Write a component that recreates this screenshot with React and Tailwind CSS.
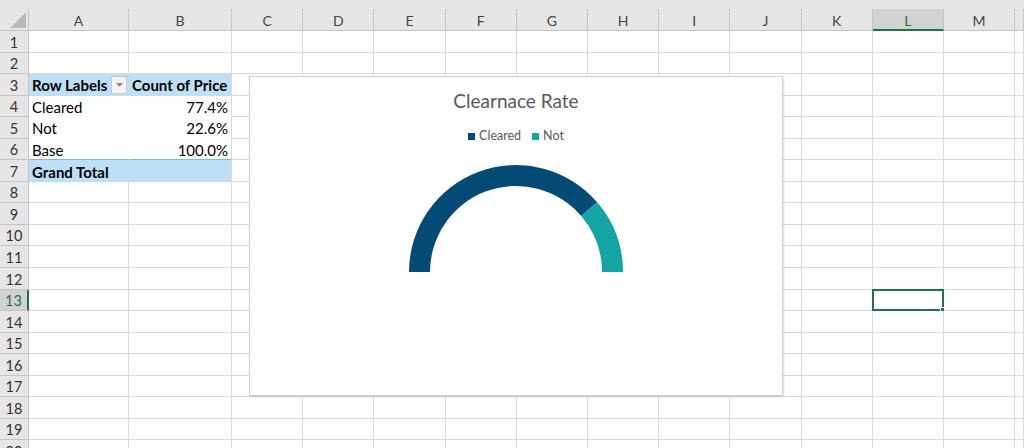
import React from 'react';

const COLS = ['A', 'B', 'C', 'D', 'E', 'F', 'G', 'H', 'I', 'J', 'K', 'L', 'M', ''];
const ROWS = Array.from({ length: 20 }, (_, i) => i + 1);

const DATA = {
  '3-0': { text: 'Row Labels', bold: true, filter: true },
  '3-1': { text: 'Count of Price', bold: true },
  '4-0': { text: 'Cleared' },
  '4-1': { text: '77.4%', right: true },
  '5-0': { text: 'Not' },
  '5-1': { text: '22.6%', right: true },
  '6-0': { text: 'Base' },
  '6-1': { text: '100.0%', right: true },
  '7-0': { text: 'Grand Total', bold: true },
};

function cellClass(r, c) {
  const pivot = r >= 3 && r <= 7 && c <= 1;
  if (!pivot) return 'bg-white border-r border-b border-[#dadada]';
  if (r === 3 || r === 7) {
    return c === 0
      ? 'bg-[#bde0f7] border-r border-b border-[#bde0f7]'
      : 'bg-[#bde0f7] border-r border-b border-r-[#dadada] border-b-[#bde0f7]';
  }
  if (r === 6) {
    return c === 0
      ? 'bg-white border-r border-b border-r-white border-b-[#7fb8e6]'
      : 'bg-white border-r border-b border-r-[#dadada] border-b-[#7fb8e6]';
  }
  return c === 0
    ? 'bg-white border-r border-b border-white'
    : 'bg-white border-r border-b border-r-[#dadada] border-b-white';
}

function Cell({ r, c }) {
  const d = DATA[`${r}-${c}`];
  const selected = r === 13 && c === 11;
  return (
    <div className={`relative flex items-center min-w-0 ${cellClass(r, c)}`}>
      {d && (
        <div
          className={`flex-1 flex items-center whitespace-nowrap text-[15px] leading-none text-black ${
            d.bold ? 'font-bold' : ''
          } ${d.right ? 'justify-end pr-[3px]' : 'pl-[3px]'}`}
        >
          <span className="pt-[3px]">{d.text}</span>
          {d.filter && (
            <span className="ml-auto mr-[1px] mt-[1px] flex h-[18px] w-[16px] items-center justify-center border border-[#c9c9c9] bg-[#f3f3f3]">
              <svg width="7" height="4" viewBox="0 0 7 4">
                <path d="M0 0 L7 0 L3.5 4 Z" fill="#8a8a8a" />
              </svg>
            </span>
          )}
        </div>
      )}
      {selected && (
        <div className="absolute left-[-1px] top-[-1px] right-[-1px] bottom-[-1px] border-2 border-[#217346]">
          <div className="absolute right-[-4px] bottom-[-4px] h-[6px] w-[6px] bg-[#217346] border border-white" />
        </div>
      )}
    </div>
  );
}

function Chart() {
  const cy = 108;
  return (
    <div className="absolute left-[249px] top-[76px] w-[534px] h-[320px] bg-white border border-[#cfcfcf] shadow-[1px_1px_2px_rgba(0,0,0,0.12)] flex flex-col items-center">
      <div className="mt-[12px] text-[19px] leading-[24px] text-[#595959]">Clearnace Rate</div>
      <div className="mt-[16px] flex items-center gap-[11px] text-[12.5px] leading-[14px] text-[#595959]">
        <div className="flex items-center gap-[4px]">
          <span className="h-[7px] w-[7px] bg-[#034a74]" />
          <span>Cleared</span>
        </div>
        <div className="flex items-center gap-[4px]">
          <span className="h-[7px] w-[7px] bg-[#12a5a3]" />
          <span>Not</span>
        </div>
      </div>
      <svg className="mt-[21px] ml-[-1px]" width="216" height="110" viewBox="0 0 216 110">
        <path
          d={`M1 ${cy} A107 107 0 0 1 189.14 38.25 L173.21 51.94 A86 86 0 0 0 22 ${cy} Z`}
          fill="#034a74"
        />
        <path
          d={`M189.14 38.25 A107 107 0 0 1 215 ${cy} L194 ${cy} A86 86 0 0 0 173.21 51.94 Z`}
          fill="#12a5a3"
        />
      </svg>
    </div>
  );
}

export default function App() {
  return (
    <div
      className="relative w-[1024px] h-[448px] overflow-hidden bg-white"
      style={{ fontFamily: 'Lato, "Noto Sans", sans-serif' }}
    >
      <div className="h-[9px] bg-[#e6e6e6]" />
      <div className="grid grid-cols-[29px_100px_103px_repeat(11,71.2px)_1fr] grid-rows-[22px_repeat(20,21.55px)]">
        <div className="relative bg-[#e6e6e6] border-r border-b border-[#c4c4c4]">
          <svg className="absolute left-[10px] top-[3px]" width="16" height="16" viewBox="0 0 16 16">
            <path d="M16 0 L16 16 L0 16 Z" fill="#b9b9b9" />
          </svg>
        </div>
        {COLS.map((col, i) => {
          const sel = col === 'L';
          return (
            <div
              key={`h${i}`}
              className={`flex items-center justify-center pt-[3px] text-[14px] leading-none border-r ${
                sel
                  ? 'bg-[#d2d2d2] text-[#217346] border-b-2 border-b-[#217346] border-r-[#c4c4c4]'
                  : 'bg-[#e6e6e6] text-[#444] border-b border-[#c4c4c4]'
              }`}
            >
              {col}
            </div>
          );
        })}
        {ROWS.map((r) => (
          <React.Fragment key={r}>
            <div
              className={`flex items-center justify-center pt-[3px] text-[14.5px] leading-none border-b ${
                r === 13
                  ? 'bg-[#d2d2d2] text-[#217346] border-r-2 border-r-[#217346] border-b-[#c4c4c4]'
                  : 'bg-[#e6e6e6] text-[#333] border-r border-[#c4c4c4]'
              }`}
            >
              {r}
            </div>
            {COLS.map((_, c) => (
              <Cell key={`${r}-${c}`} r={r} c={c} />
            ))}
          </React.Fragment>
        ))}
      </div>
      <Chart />
    </div>
  );
}
